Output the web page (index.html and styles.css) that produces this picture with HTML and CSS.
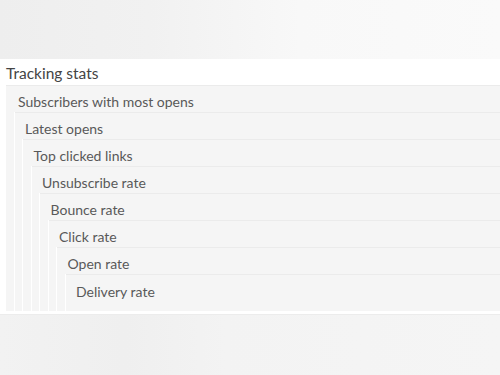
FILE: index.html
```html
<!DOCTYPE html>
<html lang="en">
<head>
  <meta charset="UTF-8">
  <title>Tracking stats</title>
  <link rel="stylesheet" href="styles.css">
</head>
<body>
  <div class="topband"></div>

  <div class="panel">
    <div class="panel-title">Tracking stats</div>

    <div class="level">
      <div class="row">Subscribers with most opens</div>
      <div class="level">
        <div class="row">Latest opens</div>
        <div class="level">
          <div class="row">Top clicked links</div>
          <div class="level">
            <div class="row">Unsubscribe rate</div>
            <div class="level">
              <div class="row">Bounce rate</div>
              <div class="level">
                <div class="row">Click rate</div>
                <div class="level">
                  <div class="row">Open rate</div>
                  <div class="level">
                    <div class="row last">Delivery rate</div>
                  </div>
                </div>
              </div>
            </div>
          </div>
        </div>
      </div>
    </div>
  </div>

  <div class="bottomband"></div>
</body>
</html>
```

FILE: styles.css
```css
body {
  margin: 0;
  font-family: 'Lato', 'Open Sans', sans-serif;
  background-color: #f4f4f4;
  color: #555;
}
.topband {
  height: 59px;
  background: linear-gradient(to right, #eeeeee 0%, #f1f1f1 30%, #f8f8f8 60%, #fafafa 100%);
}
.panel {
  background-color: #fff;
  padding-bottom: 3px;
  border-bottom: 1px solid #ececec;
}
.panel-title {
  height: 26px;
  line-height: 28px;
  padding-left: 6px;
  font-size: 15.5px;
  color: #444;
}
.level {
  margin-left: 7.5px;
  border-left: 1px solid #fff;
  background-color: #f5f5f5;
}
.panel > .level {
  margin-left: 5px;
}
.row {
  height: 26px;
  line-height: 31px;
  padding-left: 10.5px;
  border-top: 1px solid #ebebeb;
  font-size: 14px;
  color: #595959;
}
.panel > .level > .row {
  padding-left: 12px;
}
.row.last {
  height: 36px;
  line-height: 33px;
}
.bottomband {
  height: 60px;
  background: linear-gradient(to right, #f2f2f2 0%, #efefef 25%, #f3f3f3 45%, #f5f5f5 100%);
}
```
